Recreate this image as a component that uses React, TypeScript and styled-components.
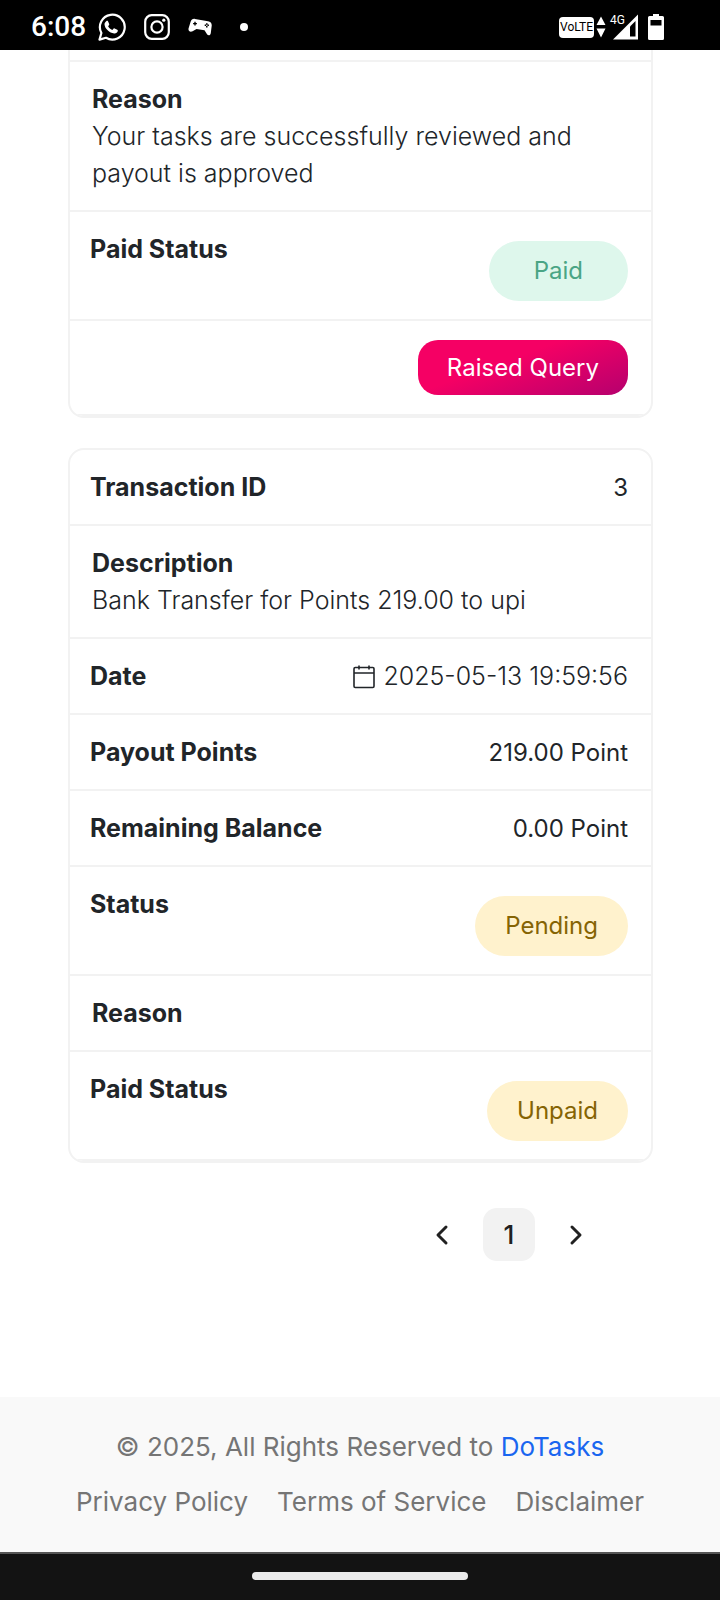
import React from "react";
import styled, { createGlobalStyle, css } from "styled-components";

const GlobalStyle = createGlobalStyle`
  *, *::before, *::after { box-sizing: border-box; }
  body {
    margin: 0;
    background: #fff;
    color: #212529;
    font-family: Inter, "Liberation Sans", sans-serif;
    font-size: 24px;
    line-height: 37px;
  }
`;

const Screen = styled.div`
  display: flex;
  flex-direction: column;
  min-height: 100vh;
`;

const StatusBar = styled.header`
  display: flex;
  align-items: center;
  justify-content: space-between;
  height: 50px;
  padding: 4px 56px 0 31px;
  background: #000;
  color: #fff;
  font-family: Roboto, sans-serif;
`;

const StatusGroup = styled.div<{ $gap: number }>`
  display: flex;
  align-items: center;
  gap: ${(p) => p.$gap}px;
`;

const Clock = styled.time`
  margin-right: -6px;
  font-size: 28px;
  font-weight: 500;
  line-height: 32px;
`;

const StatusIcon = styled.svg`
  display: block;
  flex: none;
`;

const MoreDot = styled(StatusIcon)`
  margin-left: 10px;
`;

const VolteTag = styled.span`
  padding: 0 1px;
  border-radius: 4px;
  background: #fff;
  color: #000;
  font-size: 12px;
  line-height: 21px;
`;

const Signal = styled.span`
  display: flex;
  align-items: flex-start;
  margin: 0 8px 0 2px;
`;

const NetworkLabel = styled.span`
  margin-right: -12px;
  font-size: 12px;
  line-height: 12px;
`;

const Main = styled.main`
  flex: 1;
  display: flex;
  flex-direction: column;
  gap: 30px;
  padding: 0 67px 0 68px;
`;

const Card = styled.dl<{ $continued?: boolean }>`
  margin: 0;
  border: 2px solid #f2f2f2;
  border-radius: 16px;
  overflow: hidden;
  ${(p) =>
    p.$continued &&
    css`
      padding-top: 10px;
      border-top: 0;
      border-top-left-radius: 0;
      border-top-right-radius: 0;

      & > :first-child {
        border-top: 2px solid #f2f2f2;
      }
    `}
`;

const Row = styled.div<{ $stacked?: boolean }>`
  display: flex;
  flex-direction: ${(p) => (p.$stacked ? "column" : "row")};
  justify-content: ${(p) => (p.$stacked ? "flex-start" : "space-between")};
  min-height: 76px;
  padding: 19px 23px 18px ${(p) => (p.$stacked ? 22 : 20)}px;
  border-bottom: 2px solid #f2f2f2;
`;

const ActionRow = styled(Row)`
  justify-content: flex-end;
  padding: 19px 23px;
`;

const Label = styled.dt`
  font-size: 25px;
  font-weight: 700;
`;

const Value = styled.dd<{ $detail?: boolean }>`
  display: flex;
  align-items: center;
  gap: 8px;
  margin: 0;
  ${(p) =>
    p.$detail &&
    css`
      font-size: 25px;
      font-weight: 350;
    `}
`;

const Badge = styled.span<{ $tone: "success" | "warning" }>`
  margin-top: 10px;
  padding: 11px ${(p) => (p.$tone === "success" ? 45 : 30)}px 12px;
  border-radius: 30px;
  background: ${(p) => (p.$tone === "success" ? "#def7ec" : "#fff2cd")};
  color: ${(p) => (p.$tone === "success" ? "#4aa585" : "#856404")};
`;

const QueryButton = styled.button`
  padding: 9px 29px;
  border: 0;
  border-radius: 20px;
  background: linear-gradient(160deg, #f50064 40%, #b5006e 100%);
  color: #fff;
  font: inherit;
  cursor: pointer;
`;

const Pagination = styled.nav`
  display: flex;
  justify-content: flex-end;
  gap: 15px;
  margin-top: 15px;
  padding-right: 51px;
`;

const PageButton = styled.button<{ $current?: boolean }>`
  display: flex;
  align-items: center;
  justify-content: center;
  width: 52px;
  height: 53px;
  padding: 0;
  border: 0;
  border-radius: 14px;
  background: ${(p) => (p.$current ? "#f2f2f2" : "transparent")};
  color: #212121;
  font: inherit;
  font-size: 26px;
  font-weight: 500;
  cursor: pointer;
`;

const Footer = styled.footer`
  display: flex;
  flex-direction: column;
  align-items: center;
  gap: 18px;
  padding: 31px 24px 32px;
  background: #f9f9f9;
  color: #757575;
  font-size: 26px;
`;

const Copyright = styled.p`
  margin: 0;
`;

const BrandLink = styled.a`
  color: #1a66f0;
  text-decoration: none;
`;

const FooterLinks = styled.nav`
  display: flex;
  flex-wrap: wrap;
  justify-content: center;
  gap: 29px;
`;

const FooterLink = styled.a`
  color: inherit;
  text-decoration: none;
`;

const GestureBar = styled.div`
  display: flex;
  justify-content: center;
  padding-top: 18px;
  height: 48px;
  border-top: 2px solid #555;
  background: #131313;
`;

const GestureHandle = styled.span`
  width: 30%;
  height: 8px;
  border-radius: 4px;
  background: #ebebeb;
`;

const WhatsAppIcon = () => (
  <StatusIcon width="28" height="28" viewBox="0 0 28 28" fill="none">
    <path
      d="M1.5 26.6 3.4 20A12.4 12.4 0 1 1 8 24.8Z"
      stroke="#fff"
      strokeWidth="2.2"
      strokeLinejoin="round"
    />
    <path
      d="M8.2 8.2c.6-.5 1.5-.5 1.8.1l1.2 2.6c.2.5 0 .9-.3 1.3l-.8 1c1 1.7 2.4 3 4.2 3.8l1.2-1.3c.3-.4.7-.4 1.1-.2l2.7 1.3c.5.3.6.6.5 1.1-.4 1.7-1.9 2.7-3.7 2.5-4.6-.5-9.2-4.6-9.6-8.9-.1-1.300.7-2.500 1.700-3.300Z"
      fill="#fff"
    />
  </StatusIcon>
);

const InstagramIcon = () => (
  <StatusIcon width="26" height="26" viewBox="0 0 26 26" fill="none" stroke="#fff" strokeWidth="2.2">
    <rect x="1.2" y="1.2" width="23.6" height="23.6" rx="6.5" />
    <circle cx="13" cy="13" r="5.6" />
    <circle cx="19.8" cy="6.2" r="1.6" fill="#fff" stroke="none" />
  </StatusIcon>
);

const GamepadIcon = () => (
  <StatusIcon width="24" height="18" viewBox="0 0 24 18">
    <path
      d="M7 .9 20 3.200c2.700.5 4 2.200 3.700 4.600l-.9 7.200c-.3 2.300-2.200 3-3.600 1.500l-2.700-4.200-8-1.400-3.900 2.400C2.200 14.500-.1 13.100.6 10.300L2.600 3.800C3.300 1.600 4.800.5 7 .9Z"
      fill="#fff"
    />
    <path d="M7 3.700v3.800M5.100 5.600h3.800" stroke="#000" strokeWidth="1.4" />
    <path d="M18.800 5.200v4.200M16.700 7.300h4.200" stroke="#000" strokeWidth="1.500" strokeDasharray="1.500 1.200" />
  </StatusIcon>
);

const DotIcon = () => (
  <MoreDot width="8" height="8" viewBox="0 0 8 8" fill="#fff">
    <circle cx="4" cy="4" r="4" />
  </MoreDot>
);

const DataArrowsIcon = () => (
  <StatusIcon width="10" height="22" viewBox="0 0 10 22" fill="#fff">
    <path d="M5 .5 9.500 9H.5ZM.5 12.500h9L5 21.500Z" />
  </StatusIcon>
);

const SignalIcon = () => (
  <StatusIcon width="25" height="26" viewBox="0 0 25 26">
    <path d="M25 .5V25.500H0Z" fill="#fff" />
    <path d="M17 12.500 22.500 7V22.500H17Z" fill="#000" />
  </StatusIcon>
);

const BatteryIcon = () => (
  <StatusIcon width="16" height="26" viewBox="0 0 16 26">
    <path
      d="M5 0h6v2h3.500A1.500 1.500 0 0 1 16 3.500V24.500A1.500 1.500 0 0 1 14.500 26h-13A1.500 1.500 0 0 1 0 24.500V3.500A1.500 1.500 0 0 1 1.500 2H5Z"
      fill="#fff"
    />
    <path d="M2.500 6h11v5.500h-11Z" fill="#000" />
  </StatusIcon>
);

const CalendarIcon = () => (
  <svg width="22" height="24" viewBox="0 0 22 24" fill="none" stroke="#212529" strokeWidth="1.6" aria-hidden="true">
    <rect x="1" y="2.5" width="20" height="20" rx="1.2" />
    <path d="M1 8h20M6 .5v4M16 .5v4" />
  </svg>
);

const ChevronIcon = ({ path }: { path: string }) => (
  <svg
    width="14"
    height="22"
    viewBox="0 0 14 22"
    fill="none"
    stroke="#212121"
    strokeWidth="3"
    strokeLinecap="round"
    strokeLinejoin="round"
    aria-hidden="true"
  >
    <path d={path} />
  </svg>
);

type Field = {
  label: string;
  value?: string;
  stacked?: boolean;
  badge?: "success" | "warning";
  calendar?: boolean;
};

const previousFields: Field[] = [
  {
    label: "Reason",
    value: "Your tasks are successfully reviewed and payout is approved",
    stacked: true,
  },
  { label: "Paid Status", value: "Paid", badge: "success" },
];

const currentFields: Field[] = [
  { label: "Transaction ID", value: "3" },
  { label: "Description", value: "Bank Transfer for Points 219.00 to upi", stacked: true },
  { label: "Date", value: "2025-05-13 19:59:56", calendar: true },
  { label: "Payout Points", value: "219.00 Point" },
  { label: "Remaining Balance", value: "0.00 Point" },
  { label: "Status", value: "Pending", badge: "warning" },
  { label: "Reason", stacked: true },
  { label: "Paid Status", value: "Unpaid", badge: "warning" },
];

const FieldRow = ({ label, value, stacked, badge, calendar }: Field) => (
  <Row $stacked={stacked}>
    <Label>{label}</Label>
    {value && (
      <Value $detail={stacked || calendar}>
        {calendar && <CalendarIcon />}
        {badge ? <Badge $tone={badge}>{value}</Badge> : value}
      </Value>
    )}
  </Row>
);

export default function App() {
  return (
    <Screen>
      <GlobalStyle />
      <StatusBar>
        <StatusGroup $gap={18}>
          <Clock>6:08</Clock>
          <WhatsAppIcon />
          <InstagramIcon />
          <GamepadIcon />
          <DotIcon />
        </StatusGroup>
        <StatusGroup $gap={2}>
          <VolteTag>VoLTE</VolteTag>
          <DataArrowsIcon />
          <Signal>
            <NetworkLabel>4G</NetworkLabel>
            <SignalIcon />
          </Signal>
          <BatteryIcon />
        </StatusGroup>
      </StatusBar>

      <Main>
        <Card $continued>
          {previousFields.map((field) => (
            <FieldRow key={field.label} {...field} />
          ))}
          <ActionRow>
            <QueryButton type="button">Raised Query</QueryButton>
          </ActionRow>
        </Card>

        <Card>
          {currentFields.map((field) => (
            <FieldRow key={field.label} {...field} />
          ))}
        </Card>

        <Pagination aria-label="Pagination">
          <PageButton type="button" aria-label="Previous page">
            <ChevronIcon path="M11 3 3 11l8 8" />
          </PageButton>
          <PageButton type="button" aria-current="page" $current>
            1
          </PageButton>
          <PageButton type="button" aria-label="Next page">
            <ChevronIcon path="M3 3l8 8-8 8" />
          </PageButton>
        </Pagination>
      </Main>

      <Footer>
        <Copyright>
          © 2025, All Rights Reserved to <BrandLink href="#home">DoTasks</BrandLink>
        </Copyright>
        <FooterLinks aria-label="Legal">
          <FooterLink href="#privacy">Privacy Policy</FooterLink>
          <FooterLink href="#terms">Terms of Service</FooterLink>
          <FooterLink href="#disclaimer">Disclaimer</FooterLink>
        </FooterLinks>
      </Footer>

      <GestureBar>
        <GestureHandle />
      </GestureBar>
    </Screen>
  );
}
